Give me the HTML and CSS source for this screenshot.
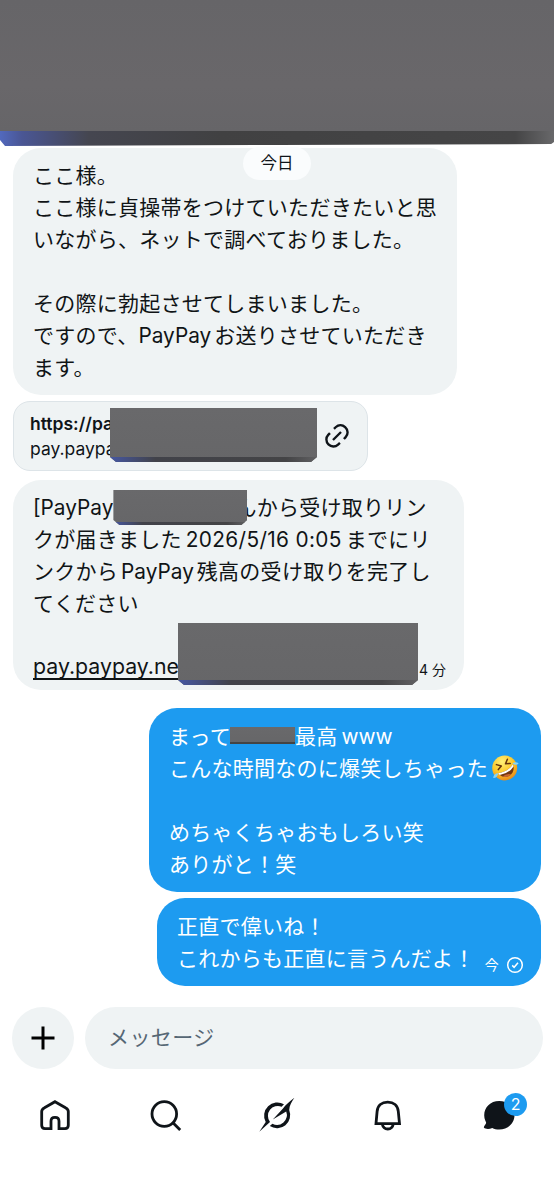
FILE: index.html
```html
<!DOCTYPE html>
<html lang="ja">
<head>
<meta charset="utf-8">
<title>メッセージ</title>
<link rel="stylesheet" href="styles.css">
</head>
<body>
<div class="screen">
  <header class="header"><div class="header-face"></div><div class="header-edge"></div></header>
  <main class="thread">
    <span class="day">今日</span>
    <section class="bubble received first">
      <p>ここ様。</p>
      <p>ここ様に貞操帯をつけていただきたいと思</p>
      <p>いながら、ネットで調べておりました。</p>
      <p>&nbsp;</p>
      <p>その際に勃起させてしまいました。</p>
      <p>ですので、<span class="latin after">PayPay</span>お送りさせていただき</p>
      <p>ます。</p>
    </section>
    <section class="link-card">
      <div class="link-text"><strong>https://pa</strong><span>pay.paypa</span></div>
      <i class="mask mask-card"></i>
      <svg class="link-icon" viewBox="0 0 24 24"><path d="M9.2 5.4 11 3.7C13.4 1.5 17 1.5 19.500 3.900C22.500 6.700 22.400 10.500 20 13l-1.600 1.800M5.500 9.300 3.900 11C1.600 13.400 1.600 17.200 4.100 19.800C6.700 22.400 10.500 22.300 13 20l1.700-1.600M8.300 15.700l7.400-7.400"/></svg>
    </section>
    <section class="bubble received second">
      <p><span class="latin">[PayPay</span><span class="name"><i class="mask mask-name"></i></span>んから受け取りリン</p>
      <p>クが届きました<span class="latin both date">2026/5/16 0:05</span>までにリ</p>
      <p>ンクから<span class="latin both pay">PayPay</span>残高の受け取りを完了し</p>
      <p>てください</p>
      <p>&nbsp;</p>
      <p class="url-row"><span class="latin url">pay.paypay.ne</span><i class="mask mask-url"></i><small>4 分</small></p>
    </section>
    <section class="bubble sent third">
      <p>まって<i class="mask mask-inline"></i>最高<span class="latin www">www</span></p>
      <p class="emoji-row">こんな時間なのに爆笑しちゃった<svg class="emoji" viewBox="0 0 28 28">
        <defs><radialGradient id="face" cx=".4" cy=".25" r=".8"><stop offset="0" stop-color="#fff178"/><stop offset=".55" stop-color="#fdc727"/><stop offset="1" stop-color="#e78319"/></radialGradient></defs>
        <circle cx="13.700" cy="14" r="12.500" fill="url(#face)"/>
        <g fill="none" stroke="#67350d" stroke-width="1.500" stroke-linecap="round" stroke-linejoin="round"><path d="m5.400 10.600 4.900 1.400-3 3.600M16.400 5.200l-1.900 4.600 4.700-.4"/></g>
        <path d="M7 19.200Q17 18 22 10.200q2.400 7.800-3.600 11.500Q12 25 7 19.200Z" fill="#74370f"/>
        <path d="M7 19.200Q17 18 22 10.200l.5 2.300Q18 19.700 8.700 21Z" fill="#fff"/>
        <path d="M11.500 22.500q4-3.500 8.700-2.200-3.700 4-8.700 2.200Z" fill="#c9652f"/>
        <path d="M21.500 9.600q2.500-2.500 6.200-.4-2.200 3-6.200.4ZM7.200 19.200q-4.700.2-5 4.800 4.200.2 5-4.800Z" fill="#83d3f7"/>
      </svg></p>
      <p>&nbsp;</p>
      <p>めちゃくちゃおもしろい笑</p>
      <p>ありがと！笑</p>
    </section>
    <section class="bubble sent fourth">
      <p>正直で偉いね！</p>
      <p class="status-row">これからも正直に言うんだよ！<small>今</small><svg class="check" viewBox="0 0 18 18"><circle cx="9" cy="9" r="7.300"/><path d="m6.200 9.400 1.900 1.900 3.900-4.500"/></svg></p>
    </section>
  </main>
  <section class="composer">
    <div class="add"><svg viewBox="0 0 24 24"><path d="M12 .5v23M.5 12h23"/></svg></div>
    <div class="field">メッセージ</div>
  </section>
  <nav class="nav">
    <div><svg viewBox="0 0 36 36"><path d="M18 4.700 28.500 10.800Q31.300 12.200 31.300 14.600V28.300Q31.300 31.700 28 31.700H22V24.200Q22 20.400 18 20.400T14 24.200V31.700H8Q4.700 31.700 4.700 28.300V14.600Q4.700 12.200 7.500 10.800Z"/></svg></div>
    <div><svg viewBox="0 0 36 36"><circle cx="16.300" cy="17" r="12.300"/><path d="m25.200 25.900 7 7"/></svg></div>
    <div><svg class="solid" viewBox="0 0 36 36"><path d="M25 7.300A13.200 13.200 0 0 0 6.700 25L.3 34.700L11 24.900A9.900 9.900 0 0 1 22.600 9.700ZM35.400.8C30.500 4.500 26.500 8 24 11.400L13.800 22.600L27.200 14.600A9.900 9.900 0 0 1 13.400 26.800L10.800 29.100A13.200 13.200 0 0 0 30.200 13C30.300 8.800 32.700 5 35.400.8Z"/></svg></div>
    <div><svg viewBox="0 0 36 36"><path d="M6 26.600 7.100 14.500C7.600 8.600 11.700 5.200 17.700 5.200S27.800 8.600 28.300 14.500L29.500 26.600ZM12.200 27Q13.300 32 17.800 32T23.300 27"/></svg></div>
    <div class="messages"><svg class="solid" viewBox="0 0 36 36"><path d="M18.200 4C9.300 4 3.200 10.300 3.200 18.200C3.200 22.300 4.900 24.100 5.100 25.600C5.300 27.500 1.900 29.500 3.100 30.800C4 31.800 7.700 32.600 11.300 30.900C13.200 32.100 15.700 32.600 18.200 32.600C26.700 32.600 33.500 26.300 33.500 18.300C33.500 10.300 26.700 4 18.200 4Z"/></svg><b class="badge">2</b></div>
  </nav>
</div>
</body>
</html>
```
FILE: styles.css
```css
* { box-sizing: border-box; }
body { margin: 0; background: #fff; color: #0f1419; font-family: Inter, "Noto Sans CJK JP", sans-serif; }
.screen { width: 554px; height: 1199px; overflow: hidden; display: flex; flex-direction: column; }
p { margin: 0; height: 32px; line-height: 32px; white-space: nowrap; }
svg { display: block; flex: none; }

.header { height: 146px; flex: none; display: flex; flex-direction: column; clip-path: polygon(0 0, 100% 0, 100% 142px, 99.500% 144px, 50% 145px, 5px 146px, 0 140px); }
.header-face { height: 131px; background: linear-gradient(#666568, #69676a 65%, #666568); }
.header-edge { height: 15px; background: linear-gradient(90deg, #5269bd, #4a5694 4%, #454650 16%, #414142 40%, #454546 93%, #68686a); }

.thread { position: relative; height: 840px; flex: none; padding: 2px 13px 0; display: flex; flex-direction: column; align-items: flex-start; }
.day { position: absolute; z-index: 1; left: 243px; top: 1px; width: 68px; height: 33px; border-radius: 17px; background: #fafcfd; text-align: center; font-size: 16.500px; line-height: 32px; }
.bubble { flex: none; font-family: "Noto Sans CJK JP", sans-serif; font-size: 21px; letter-spacing: .26px; padding: 10px 20px 12px; border-radius: 28px; }
.received { background: #eff3f4; color: #101416; }
.sent { align-self: flex-end; background: #1d9bf0; color: #fff; padding-top: 11px; }
.first { width: 444px; height: 247px; }
.second { width: 451px; height: 210px; margin-top: 9px; }
.third { width: 392px; height: 184px; margin-top: 18px; }
.fourth { width: 384px; height: 88px; margin-top: 6px; }
.latin { font-family: Inter, sans-serif; font-size: 20.800px; letter-spacing: 0; }
.after { margin-right: 3px; }
.both { margin: 0 4px; }
.pay { margin: 0 3px; }
.date { letter-spacing: .35px; }
.www { margin-left: 4px; }

.link-card { width: 355px; height: 70px; flex: none; margin-top: 6px; padding: 6px 16px; display: flex; border: 1px solid #dde4e8; border-radius: 17px; background: #eff3f4; }
.link-text { width: 80px; padding-top: 3px; display: flex; flex-direction: column; font-size: 17.500px; line-height: 25px; white-space: nowrap; }
.link-text strong { font-weight: 600; }
.link-icon { width: 26px; height: 26px; margin: 15px 0 0 7px; fill: none; stroke: #0f1419; stroke-width: 2.200; }

.mask { flex: none; display: block; background: linear-gradient(#69696b, #666668); clip-path: polygon(0 0, 100% 0, 100% calc(100% - 5px), calc(100% - 6px) 100%, 6px 100%, 0 calc(100% - 5px)); }
.mask::after { content: ""; display: block; height: 5px; background: linear-gradient(90deg, #4657a2, #414249 22%, #444446 85%, #606062); }
.mask-card { position: relative; width: 207px; height: 54px; padding-top: 49px; }
.name { display: inline-block; width: 122px; height: 20px; vertical-align: top; }
.mask-name { position: relative; z-index: 1; width: 134px; height: 35px; padding-top: 32px; }
.mask-name::after { height: 3px; }
.url-row { display: flex; }
.url { width: 144px; font-size: 21.300px; text-decoration: underline; text-decoration-thickness: 1.500px; text-underline-offset: 4px; text-decoration-skip-ink: none; }
.mask-url { position: relative; width: 240px; height: 62px; padding-top: 57px; margin: -27px 0 0 1px; }
small { font-size: 14px; letter-spacing: 0; }
.url-row small { margin: 4px 0 0 1px; font-family: Inter, "Noto Sans CJK JP", sans-serif; }
.mask-inline { display: inline-block; vertical-align: top; width: 65px; height: 17px; margin: 8px 0 0 -1px; padding-top: 15px; clip-path: none; }
.mask-inline::after { height: 2px; background: #444; }
.emoji-row, .status-row { display: flex; }
.emoji { width: 28px; height: 28px; margin: 3px 0 0 3px; }
.status-row small { margin: 7px 0 0 10px; }
.check { width: 18px; height: 18px; margin: 15px 0 0 7px; fill: none; stroke: #fff; stroke-width: 1.500; }

.composer { height: 84px; flex: none; padding: 21px 11px 0 12px; display: flex; gap: 11px; }
.add { width: 62px; height: 62px; border-radius: 50%; background: #eff3f4; display: grid; place-items: center; }
.add svg { width: 24px; height: 24px; stroke: #000; stroke-width: 3; }
.field { flex: 1; height: 62px; border-radius: 31px; background: #eff3f4; padding-left: 23px; font: 21px/59px "Noto Sans CJK JP", sans-serif; letter-spacing: .4px; color: #566775; }
.nav { height: 90px; flex: none; display: grid; grid-template-columns: repeat(5, 1fr); }
.nav > div { display: flex; justify-content: center; padding-top: 27px; }
.nav svg { width: 36px; height: 36px; fill: none; stroke: #0f1419; stroke-width: 2.800; }
.nav svg.solid { fill: #0f1419; stroke: none; }
.messages { position: relative; }
.badge { position: absolute; left: 61px; top: 23px; width: 23px; height: 23px; border-radius: 50%; background: #1d9bf0; color: #fff; font-size: 16px; font-weight: 400; line-height: 23px; text-align: center; }
```
